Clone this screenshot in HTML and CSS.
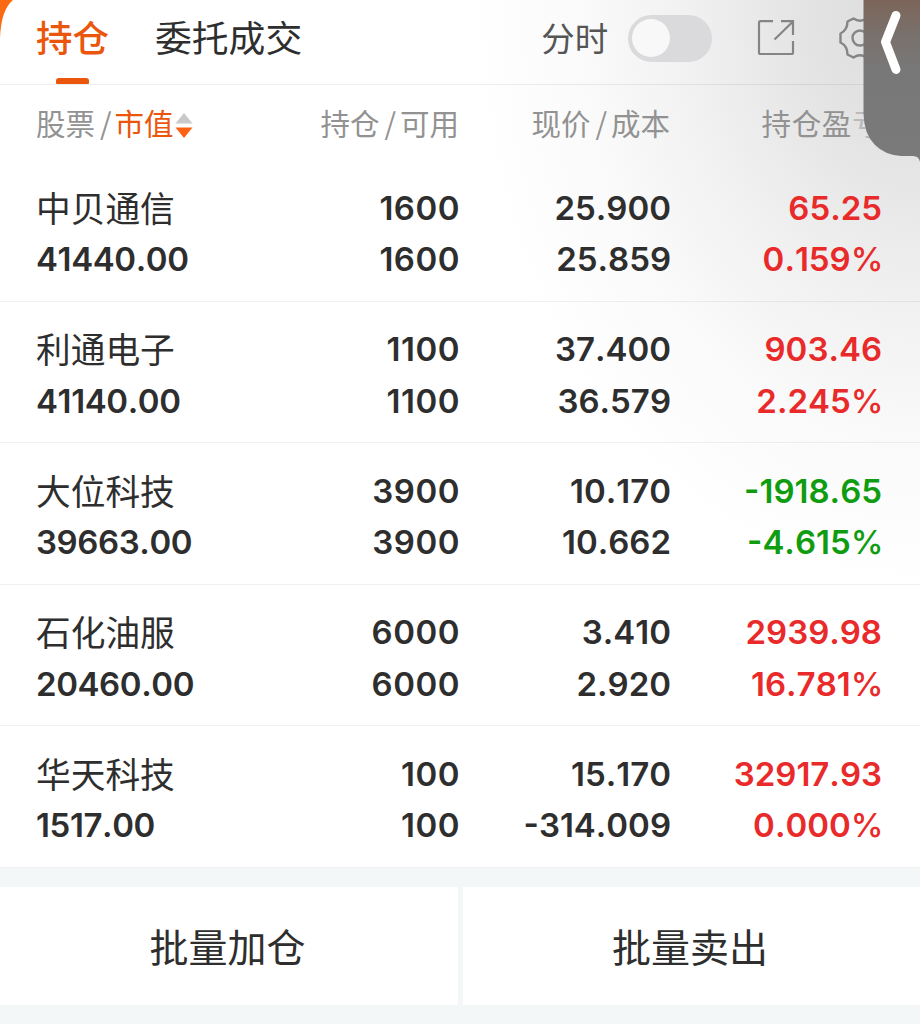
FILE: index.html
```html
<!DOCTYPE html>
<html lang="zh-CN">
<head>
  <meta charset="UTF-8">
  <meta name="viewport" content="width=device-width, initial-scale=1.0">
  <title>持仓</title>
  <link rel="stylesheet" href="styles.css">
</head>
<body>
  <div class="page">
    <div class="positions">
      <div class="topbar">
        <div class="tab active">持仓</div>
        <div class="tab orders">委托成交</div>
        <div class="tools">
          <span class="tool-label">分时</span>
          <span class="switch"><span class="knob"></span></span>
          <svg class="icon-share" width="40" height="40" viewBox="0 0 40 40" fill="none" stroke="#858585" stroke-width="2.2">
            <path d="M17 3.200H4.500Q3 3.200 3 4.700V34.500Q3 36 4.500 36H35.500Q37 36 37 34.500V23M18.500 21.500L37 3.500M25 3.200H37V17"/>
          </svg>
          <svg class="icon-gear" width="44" height="44" viewBox="0 0 44 44" fill="none" stroke="#858585" stroke-width="2.4" stroke-linejoin="round">
            <path d="M15.500 2.500Q22 7 28.500 2.500L34 5.500Q34 14 41 17.500V26.500Q34 30 34 38.500L28.500 41.500Q22 37 15.500 41.500L9.500 38.500Q9.500 30 2.500 26.500V17.500Q9.500 14 9.500 5.500Z"/>
            <circle cx="22" cy="22" r="7.500"/>
          </svg>
        </div>
      </div>

      <div class="grid head">
        <div>股票<i>/</i><span class="sorted">市值</span><svg class="sort" width="18" height="26" viewBox="0 0 18 26"><path d="M9 0L17.500 10.500H.5Z" fill="#c9c9c9"/><path d="M.5 14.500H17.500L9 25Z" fill="#fb6214"/></svg></div>
        <div>持仓<i>/</i>可用</div>
        <div>现价<i>/</i>成本</div>
        <div>持仓盈<span class="faded">亏</span></div>
      </div>

      <div class="grid row">
        <div><span class="name">中贝通信</span>41440.00</div>
        <div>1600<br>1600</div>
        <div>25.900<br>25.859</div>
        <div class="up">65.25<br>0.159<b>%</b></div>
      </div>
      <div class="grid row">
        <div><span class="name">利通电子</span>41140.00</div>
        <div>1100<br>1100</div>
        <div>37.400<br>36.579</div>
        <div class="up">903.46<br>2.245<b>%</b></div>
      </div>
      <div class="grid row">
        <div><span class="name">大位科技</span>39663.00</div>
        <div>3900<br>3900</div>
        <div>10.170<br>10.662</div>
        <div class="down">-1918.65<br>-4.615<b>%</b></div>
      </div>
      <div class="grid row">
        <div><span class="name">石化油服</span>20460.00</div>
        <div>6000<br>6000</div>
        <div>3.410<br>2.920</div>
        <div class="up">2939.98<br>16.781<b>%</b></div>
      </div>
      <div class="grid row">
        <div><span class="name">华天科技</span>1517.00</div>
        <div>100<br>100</div>
        <div>15.170<br>-314.009</div>
        <div class="up">32917.93<br>0.000<b>%</b></div>
      </div>
    </div>

    <div class="actions">
      <div class="action">批量加仓</div>
      <div class="action">批量卖出</div>
    </div>

    <svg class="corner" width="14" height="40" viewBox="0 0 14 40"><path d="M0 0H13Q1 10 0 38Z" fill="#fb6a12"/></svg>

    <!-- collapsed side drawer -->
    <svg class="drawer" width="57" height="164" viewBox="0 0 57 164">
      <defs>
        <linearGradient id="drawerFill" x1="0" y1="0" x2="0" y2="1">
          <stop offset="0" stop-color="#7c6559"/>
          <stop offset=".2" stop-color="#79706b"/>
          <stop offset=".42" stop-color="#787878"/>
          <stop offset="1" stop-color="#7a7a7a"/>
        </linearGradient>
      </defs>
      <path d="M.5 0H57V162Q56 156 50 156H38Q22 155 12 145Q1 134 .5 114Z" fill="url(#drawerFill)"/>
      <path d="M33 15.500L22.500 42L33 69.500" fill="none" stroke="#fff" stroke-width="9" stroke-linecap="round" stroke-linejoin="round"/>
    </svg>
  </div>
</body>
</html>
```
FILE: styles.css
```css
* { box-sizing: border-box; }
body { margin: 0; background: #fff; color: #2e2e2e; font-family: Inter, "Noto Sans CJK SC", sans-serif; }
.page { position: relative; width: 920px; height: 1024px; overflow: hidden; background: #f3f7f8; }
.positions {
  height: 868px;
  background: radial-gradient(ellipse 450px 590px at 100% 0, #dcdcdc 0%, #e3e3e3 25%, #f0f0f0 50%, #fafafa 75%, #fff 100%) #fff;
}

.topbar { display: flex; height: 85px; padding-left: 36px; border-bottom: 1px solid rgba(0,0,0,0.07); }
.tab { display: flex; flex-direction: column; align-items: center; font-size: 36.5px; line-height: 78px; height: 84px; }
.active { color: #e9560c; font-weight: 500; }
.active::after { content: ""; width: 33px; height: 6px; border-radius: 3px 3px 1px 1px; background: #e9560c; }
.orders { margin-left: 46px; font-size: 36.8px; }
.tools { display: flex; align-items: center; height: 76px; margin-left: 239px; }
.tool-label { padding-bottom: 4px; font-size: 33.5px; color: #555; white-space: nowrap; }
.switch { flex: none; width: 84px; height: 47px; margin-left: 20px; padding: 4px; border-radius: 24px; background: #dadadc; }
.knob { display: block; width: 38px; height: 38px; border-radius: 50%; background: #f8f8f8; }
.icon-share { flex: none; margin-left: 44px; }
.icon-gear { flex: none; margin-left: 42px; }

.grid { display: grid; grid-template-columns: 213px 211px 211px 211px; padding-left: 36px; }
.grid > div { text-align: right; white-space: nowrap; }
.grid > div:first-child { text-align: left; }
.head { height: 75px; font-family: "Noto Sans CJK SC", sans-serif; font-size: 29.5px; line-height: 74px; color: #929292; }
.head i { padding: 0 4px 0 5px; font-style: normal; }
.head > div:nth-child(2), .head > div:nth-child(3) { padding-right: 1px; }
.head > div:last-child { letter-spacing: .6px; }
.sorted { color: #e9560c; }
.sort { margin-left: 1px; vertical-align: -4px; }
.head > div:first-child i { padding: 0 3px 0 5px; }
.faded { opacity: .5; }

.row { height: 141.6px; padding-top: 22.5px; border-bottom: 1px solid rgba(0,0,0,0.06); font-size: 33px; font-weight: 600; line-height: 51.5px; font-kerning: none; }
.row > div:first-child { letter-spacing: -.4px; }
.row > div:nth-child(2) { letter-spacing: .5px; }
.name { display: block; height: 51.5px; font-size: 34.7px; font-weight: 400; letter-spacing: 0; line-height: 53px; }
.up { color: #e92a2a; }
.down { color: #109c10; }
.row b { margin-right: -1.5px; font-weight: 500; }

.actions { display: grid; grid-template-columns: 458px 457px; gap: 5px; margin-top: 19px; }
.action { height: 118px; padding-right: 3px; background: #fff; font-size: 39px; line-height: 122px; text-align: center; }

.corner { position: absolute; top: 0; left: 0; }
.drawer { position: absolute; top: 0; right: 0; }
```
